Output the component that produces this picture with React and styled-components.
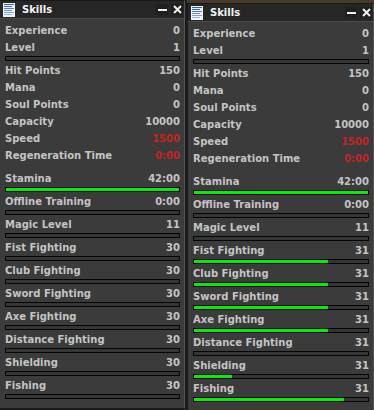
import React from "react";
import styled, { createGlobalStyle } from "styled-components";

const GlobalStyle = createGlobalStyle`
  body {
    margin: 0;
    background: #1c1c1c;
    font-family: "DejaVu Sans", Verdana, sans-serif;
  }
`;

const base = [
  { label: "Experience", value: "0" },
  { label: "Level", value: "1", bar: 0 },
  { label: "Hit Points", value: "150" },
  { label: "Mana", value: "0" },
  { label: "Soul Points", value: "0" },
  { label: "Capacity", value: "10000" },
  { label: "Speed", value: "1500", red: true },
  { label: "Regeneration Time", value: "0:00", red: true, last: true },
  { label: "Stamina", value: "42:00", bar: 100 },
  { label: "Offline Training", value: "0:00", bar: 0 },
  { label: "Magic Level", value: "11", bar: 0 },
];

const skillNames = [
  "Fist Fighting",
  "Club Fighting",
  "Sword Fighting",
  "Axe Fighting",
  "Distance Fighting",
  "Shielding",
  "Fishing",
];

const leftSkills = skillNames.map((label) => ({ label, value: "30", bar: 0 }));
const rightFill = [77, 77, 77, 77, 0, 22, 86];
const rightSkills = skillNames.map((label, i) => ({
  label,
  value: "31",
  bar: rightFill[i],
}));

function DocIcon() {
  return (
    <svg width="12" height="14" viewBox="0 0 12 14">
      <rect x="0" y="0" width="12" height="14" fill="#f2f4fa" />
      {[1, 3, 5, 7, 9, 11].map((y, i) => (
        <rect
          key={y}
          x="1"
          y={y}
          width={i % 2 ? 8 : 10}
          height="1"
          fill={["#2f5fd0", "#3d6bd6", "#4f7cdc", "#6590e2", "#7ba3e8", "#93b6ee"][i]}
        />
      ))}
    </svg>
  );
}

function MinIcon() {
  return (
    <svg width="9" height="9" viewBox="0 0 9 9">
      <rect x="0" y="4" width="9" height="2" fill="#f0f0f0" />
    </svg>
  );
}

function CloseIcon() {
  return (
    <svg width="9" height="9" viewBox="0 0 9 9">
      <path d="M1 1 L8 8 M8 1 L1 8" stroke="#f0f0f0" strokeWidth="2" />
    </svg>
  );
}

function Entry({ item }) {
  return (
    <EntryBox $last={item.last}>
      <Row>
        <span>{item.label}</span>
        <Value $red={item.red}>{item.value}</Value>
      </Row>
      {item.bar !== undefined && (
        <Bar>
          <Fill style={{ width: `${item.bar}%` }} />
        </Bar>
      )}
    </EntryBox>
  );
}

function SkillsWindow({ skills, $shift, $width }) {
  return (
    <Window $shift={$shift} $width={$width}>
      <TitleBar>
        <IconBox>
          <DocIcon />
        </IconBox>
        <Title>Skills</Title>
        <TitleButton>
          <MinIcon />
        </TitleButton>
        <TitleButton>
          <CloseIcon />
        </TitleButton>
      </TitleBar>
      <Content>
        {base.map((item) => (
          <Entry key={item.label} item={item} />
        ))}
        {skills.map((item) => (
          <Entry key={item.label} item={item} />
        ))}
      </Content>
    </Window>
  );
}

export default function App() {
  return (
    <Desktop>
      <GlobalStyle />
      <SkillsWindow skills={leftSkills} $shift={0} $width={186} />
      <RightColumn>
        <SkillsWindow skills={rightSkills} $shift={0} $width={187} />
      </RightColumn>
    </Desktop>
  );
}

const Desktop = styled.div`
  display: flex;
  align-items: flex-start;
  height: 410px;
  overflow: hidden;
  padding-left: 0;
  margin-left: -1px;
`;

const RightColumn = styled.div`
  margin-left: 2px;
  border-top: 3px solid #4a3b29;
  background: #1c1c1c;
`;

const Window = styled.div`
  width: ${(p) => p.$width}px;
  box-sizing: border-box;
  margin-top: ${(p) => p.$shift}px;
  background: #3b3b3b;
  border: 1px solid #191919;
  border-right-color: #555;
  color: #c4c4c4;
  font-size: 10px;
  font-weight: bold;
`;

const TitleBar = styled.div`
  display: flex;
  align-items: center;
  height: 17px;
  background: #262626;
  border-bottom: 1px solid #4a4a4a;
  padding: 0 1px 0 3px;
`;

const IconBox = styled.div`
  display: flex;
  width: 12px;
  height: 14px;
`;

const Title = styled.div`
  flex: 1;
  margin-left: 7px;
  color: #f4f4f4;
  font-size: 10px;
  line-height: 17px;
`;

const TitleButton = styled.div`
  display: flex;
  align-items: center;
  justify-content: center;
  width: 12px;
  height: 11px;
  margin-left: 3px;
  background: #1f1f1f;
`;

const Content = styled.div`
  padding: 5px 4px 6px 5px;
`;

const EntryBox = styled.div`
  margin-bottom: ${(p) => (p.$last ? 9 : 3)}px;
`;

const Row = styled.div`
  display: flex;
  justify-content: space-between;
  line-height: 14px;
  height: 14px;
  white-space: nowrap;
`;

const Value = styled.span`
  color: ${(p) => (p.$red ? "#c42424" : "#c4c4c4")};
`;

const Bar = styled.div`
  margin-top: 1px;
  height: 5px;
  box-sizing: border-box;
  border: 1px solid #050505;
  background: #353535;
`;

const Fill = styled.div`
  height: 100%;
  background: #00f000;
`;
